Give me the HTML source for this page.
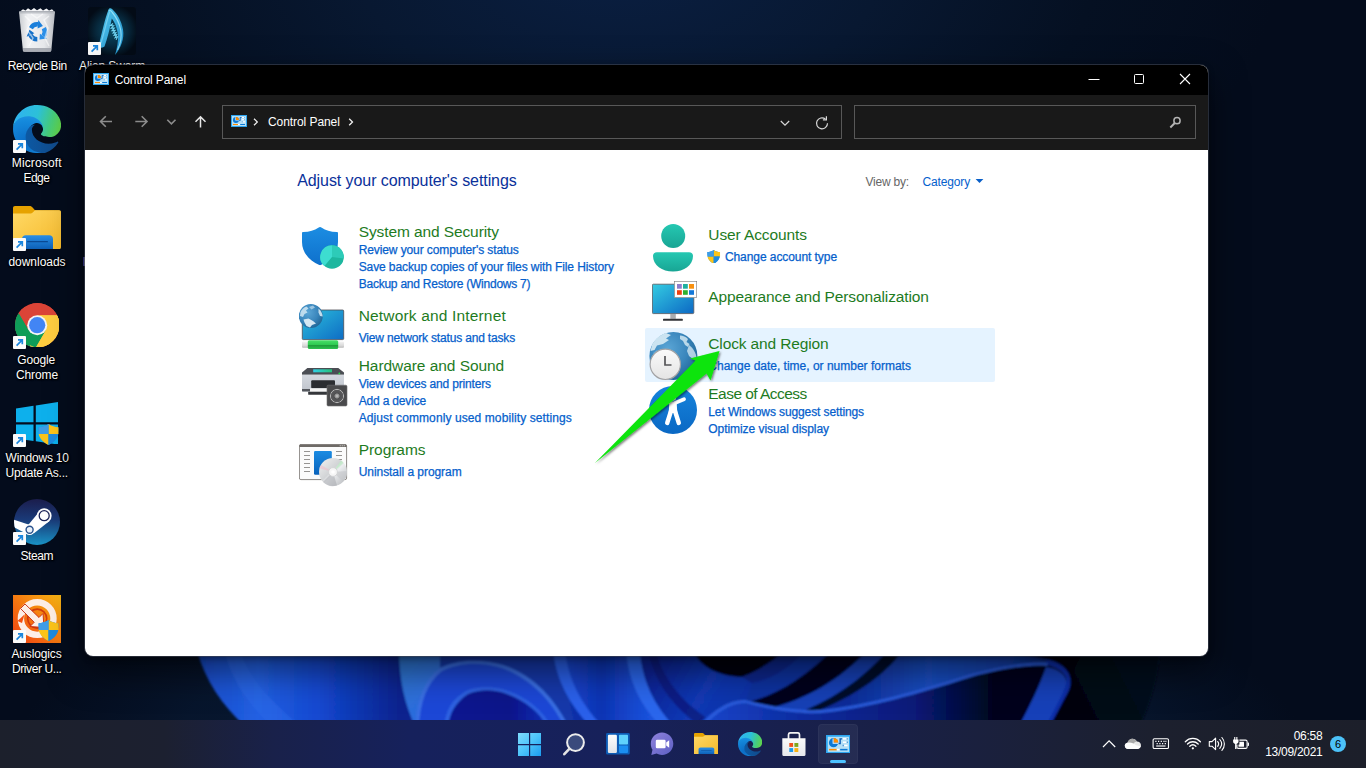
<!DOCTYPE html>
<html lang="en"><head><meta charset="utf-8"><title>Control Panel</title>
<style>
html,body{margin:0;padding:0;}
body{width:1366px;height:768px;overflow:hidden;position:relative;background:#040c1c;font-family:"Liberation Sans",sans-serif;}
.t{position:absolute;white-space:nowrap;display:block;}
.abs{position:absolute;}
#wall{position:absolute;left:0;top:0;width:1366px;height:768px;}
#win{position:absolute;left:85px;top:65px;width:1123px;height:591px;border-radius:8px;background:#fff;overflow:hidden;box-shadow:0 0 0 1px rgba(70,75,90,.55),0 14px 36px rgba(0,0,0,.55),0 2px 6px rgba(0,0,0,.35);}
#tb{position:absolute;left:0;top:0;width:100%;height:30px;background:#000;}
#nav{position:absolute;left:0;top:30px;width:100%;height:55px;background:#191919;}
.box{position:absolute;top:10px;height:32px;border:1px solid #585858;background:#191919;box-sizing:border-box;}
#task{position:absolute;left:0;top:720px;width:1366px;height:48px;background:linear-gradient(90deg,#1c202c 0%,#1c2030 12%,#19214a 20%,#16215c 30%,#17215a 45%,#182050 55%,#192046 65%,#1b2036 78%,#1c202e 85%,#1c1f2a 100%);}
.lk{-webkit-text-stroke:.25px #0560cc;}
.dl{text-shadow:0 0 2px #000,1px 1px 2px #000,0 1px 1px #000;}
</style></head>
<body>
<svg id="wall" width="1366" height="768" viewBox="0 0 1366 768"><defs>
<radialGradient id="wg0" cx="620" cy="-40" r="660" gradientUnits="userSpaceOnUse" gradientTransform="translate(620 -40) scale(1 .55) translate(-620 40)"><stop offset="0" stop-color="#0a1f42"/><stop offset=".4" stop-color="#081831"/><stop offset=".72" stop-color="#051022"/><stop offset="1" stop-color="#040c1c"/></radialGradient>
<linearGradient id="wp1" x1="197" y1="0" x2="400" y2="0" gradientUnits="userSpaceOnUse"><stop offset="0" stop-color="#184ccc"/><stop offset=".3" stop-color="#2260e2"/><stop offset=".6" stop-color="#1448d0"/><stop offset="1" stop-color="#08238e"/></linearGradient>
<linearGradient id="wp2" x1="400" y1="656" x2="470" y2="720" gradientUnits="userSpaceOnUse"><stop offset="0" stop-color="#2f78d2"/><stop offset="1" stop-color="#2a62e6"/></linearGradient>
<linearGradient id="wp3" x1="553" y1="0" x2="650" y2="0" gradientUnits="userSpaceOnUse"><stop offset="0" stop-color="#1a4cd8"/><stop offset=".5" stop-color="#0e34b4"/><stop offset="1" stop-color="#1a52dc"/></linearGradient>
<linearGradient id="wp4" x1="650" y1="656" x2="760" y2="720" gradientUnits="userSpaceOnUse"><stop offset="0" stop-color="#0a2092"/><stop offset=".5" stop-color="#1238b4"/><stop offset="1" stop-color="#0e30a4"/></linearGradient>
<linearGradient id="wp5" x1="850" y1="0" x2="1046" y2="0" gradientUnits="userSpaceOnUse"><stop offset="0" stop-color="#0c2c98"/><stop offset=".4" stop-color="#1a4ec2"/><stop offset=".8" stop-color="#1340ac"/><stop offset="1" stop-color="#0a2c88"/></linearGradient>
<linearGradient id="wp6" x1="880" y1="0" x2="1045" y2="0" gradientUnits="userSpaceOnUse"><stop offset="0" stop-color="#0d3290"/><stop offset=".6" stop-color="#0a2a80"/><stop offset="1" stop-color="#061440"/></linearGradient>
<linearGradient id="wp7" x1="450" y1="0" x2="550" y2="0" gradientUnits="userSpaceOnUse"><stop offset="0" stop-color="#0a1890"/><stop offset=".6" stop-color="#08148a"/><stop offset="1" stop-color="#1030b8"/></linearGradient>
<radialGradient id="wg1" cx="660" cy="740" r="640" gradientUnits="userSpaceOnUse" gradientTransform="translate(660 740) scale(1 .28) translate(-660 -740)"><stop offset="0" stop-color="#0c2850" stop-opacity=".75"/><stop offset=".75" stop-color="#0a2040" stop-opacity=".45"/><stop offset="1" stop-color="#081a38" stop-opacity="0"/></radialGradient>
<linearGradient id="wp9" x1="1050" y1="720" x2="1150" y2="670" gradientUnits="userSpaceOnUse"><stop offset="0" stop-color="#01030a"/><stop offset=".35" stop-color="#020611"/><stop offset="1" stop-color="#05101f"/></linearGradient>
<filter id="wbl" x="150" y="640" width="1050" height="100" filterUnits="userSpaceOnUse"><feGaussianBlur stdDeviation="1.1"/></filter>
<linearGradient id="wp8" x1="700" y1="0" x2="1030" y2="0" gradientUnits="userSpaceOnUse"><stop offset="0" stop-color="#1846cc"/><stop offset=".3" stop-color="#0e2ca0"/><stop offset=".65" stop-color="#081a78"/><stop offset=".9" stop-color="#02041a"/><stop offset="1" stop-color="#02041a"/></linearGradient>
</defs>
<rect width="1366" height="768" fill="url(#wg0)"/>
<rect width="1366" height="768" fill="url(#wg1)"/>
<g filter="url(#wbl)">
<path d="M197 650 C205 680 222 705 245 726 L1135 726 C1150 700 1158 675 1160 650 Z" fill="#0b2da8"/>
<path d="M197 650 C205 680 222 705 245 726 L420 726 C405 700 398 675 400 650 Z" fill="url(#wp1)"/>
<path d="M224 650 C232 680 248 705 272 726 L300 726 C270 700 250 680 240 650 Z" fill="#2b6ae8" opacity=".55"/>
<path d="M399 650 C399 680 405 705 415 726 L570 726 L560 650 Z" fill="url(#wp2)"/>
<path d="M440 650 L560 650 L575 726 L560 726 C550 700 530 676 500 666 C480 660 455 662 440 668Z" fill="#1238aa"/>
<path d="M416 726 C417 700 424 680 440 668 C455 660 480 658 503 665 C535 676 555 700 568 726Z" fill="#3a70e4"/>
<path d="M419 726 C420 702 427 683 442 671 C457 663 480 661 502 668 C532 679 552 702 564 726Z" fill="#1a46d6"/>
<path d="M444 726 C446 710 452 699 466 691 C478 686 494 686 508 691 C528 698 542 710 551 726Z" fill="#2e62e2"/>
<path d="M448 726 C450 712 456 702 468 694 C480 689 494 689 507 694 C526 701 539 712 547 726Z" fill="url(#wp7)"/>
<path d="M553 650 C556 680 570 705 590 726 L660 726 C640 705 628 680 626 650 Z" fill="url(#wp3)"/>
<path d="M553 650 C556 680 570 705 590 726 L602 726 C582 705 568 680 565 650 Z" fill="#2a60ea"/>
<path d="M626 650 C628 680 640 705 660 726 L674 726 C654 705 642 680 640 650 Z" fill="#2c66ec"/>
<path d="M640 650 C642 680 654 705 674 726 L910 726 L910 650 Z" fill="url(#wp4)"/>
<path d="M655 650 C665 685 690 710 720 726 L700 726 C675 708 655 685 648 650Z" fill="#081a7c" opacity=".8"/>
<path d="M693 650 C700 668 720 676 742 677 C760 670 775 660 785 650Z" fill="#01030c"/>
<path d="M742 677 C760 670 775 660 785 650 L806 650 C790 668 770 680 752 683Z" fill="#0b288c"/>
<path d="M752 683 C770 680 790 668 806 650 L832 650 C812 672 790 688 762 698 C750 702 745 700 745 703 Z" fill="#0e30a0"/>
<path d="M745 703 C775 696 805 678 832 650 L868 650 C840 680 805 700 768 709 Z" fill="#02051a"/>
<path d="M768 709 C805 700 840 680 868 650 L888 650 C862 680 835 700 800 712 Z" fill="#1440b6"/>
<path d="M790 716 C830 702 862 680 888 650 L905 650 C885 678 850 702 810 718 Z" fill="#030a2c"/>
<path d="M800 718 C850 700 885 676 903 650 L1046 650 L1046 664 C1030 663 1000 668 971 676 C940 685 900 697 857 707 C835 711 815 715 800 718Z" fill="url(#wp5)"/>
<path d="M697 726 C710 712 725 702 745 703 C770 708 800 716 830 712 C870 706 915 694 971 676 C1000 668 1030 663 1047 665 C1060 668 1068 676 1066 682 C1064 690 1058 700 1044 726Z" fill="url(#wp8)"/>
<path d="M700 726 C712 712 727 700 745 700 C770 706 800 713 830 709 C870 704 915 692 971 674 C1000 666 1030 661 1048 663 L1047 666 C1030 664 1000 669 971 677 C915 695 870 707 830 712 C800 716 770 709 745 703 C730 703 716 713 704 726Z" fill="#2a5cdc"/>
<path d="M1019 726 C1030 705 1040 685 1046 667 C1058 668 1068 676 1066 684 C1064 692 1058 702 1046 726Z" fill="#1440b8"/>
<path d="M905 650 C960 650 1020 652 1050 660 C1070 666 1074 680 1068 692 L1050 726 L1140 726 C1152 700 1158 675 1160 650 Z" fill="url(#wp9)"/>
<path d="M1035 650 C1050 654 1066 660 1072 672 L1084 650Z" fill="#01030a"/>
</g>
</svg>
<svg class="abs" style="left:19px;top:8px" width="36" height="44" viewBox="0 0 36 44" ><defs><linearGradient id="rbg" x1="0" y1="0" x2="1" y2="0"><stop offset="0" stop-color="#c9ccd0"/><stop offset=".25" stop-color="#f1f2f4"/><stop offset=".7" stop-color="#e6e8eb"/><stop offset="1" stop-color="#b9bcc2"/></linearGradient></defs>
<path d="M1 3.600 L4 1.200 L6.500 2.600 L9 0.300 L12 2.200 L15 0 L18 2.200 L21.500 0.300 L24 2.400 L27.500 0.500 L30 2.600 L33 1.300 L35.200 3.600Z" fill="#f3f4f6"/>
<path d="M0 3.600 H36 L32.300 42.600 C32.200 43.400 31.700 43.800 31 43.800 H5.200 C4.500 43.800 4 43.400 3.900 42.600Z" fill="url(#rbg)"/>
<path d="M0 3.600 H36 L35.800 5.400 H0.200Z" fill="#aeb2b8" opacity=".7"/>
<path d="M4 40 H32.300 L32 43 C32 43.500 31.600 43.800 31 43.800 H5.200 C4.600 43.800 4.200 43.500 4.200 43Z" fill="#9a9ea6" opacity=".8"/>
<g transform="translate(18.300 23.800)"><g id="rcy"><path d="M-6.500 -3.750 A7.500 7.500 0 0 1 0.650 -7.470" fill="none" stroke="#1b7fdb" stroke-width="4.600"/><path d="M1 -11.750 L0.300 -3.200 L5.600 -5.800Z" fill="#1b7fdb"/></g><g transform="rotate(120)"><path d="M-6.500 -3.750 A7.500 7.500 0 0 1 0.650 -7.470" fill="none" stroke="#2a8ee8" stroke-width="4.600"/><path d="M1 -11.750 L0.300 -3.200 L5.600 -5.800Z" fill="#2a8ee8"/></g><g transform="rotate(240)"><path d="M-6.500 -3.750 A7.500 7.500 0 0 1 0.650 -7.470" fill="none" stroke="#1470c8" stroke-width="4.600"/><path d="M1 -11.750 L0.300 -3.200 L5.600 -5.800Z" fill="#1470c8"/></g></g>
<path d="M6 8 L12 14 L8 22 L14 30 L10 38 M30 8 L25 12 L29 20 L26 30 L30 38 M12 6 L18 10 L24 6" fill="none" stroke="#fff" stroke-width="1.500" opacity=".55"/></svg>
<svg class="abs" style="left:88px;top:7px" width="48" height="48" viewBox="0 0 48 48" ><defs><radialGradient id="alg" cx=".5" cy=".5" r=".55"><stop offset="0" stop-color="#0b4d66"/><stop offset=".6" stop-color="#07283c"/><stop offset="1" stop-color="#030b16"/></radialGradient>
<linearGradient id="alc" x1="0" y1="0" x2="1" y2="1"><stop offset="0" stop-color="#55c8ee"/><stop offset="1" stop-color="#1f8fca"/></linearGradient></defs>
<rect width="48" height="48" rx="3" fill="url(#alg)"/>
<path d="M10.500 39.500 C13.500 28 16.500 13 20.500 2.500 C21.300 0.800 22.800 0.900 24.300 2.200 C29.500 7 33.500 14 35 22.500 C36.500 32 33 40.500 27 48 C29 41 30.800 33.500 29.800 26.500 C28.800 19.500 26.300 14.500 23.800 11.500 C22 21 19.500 31 16.500 39.500 C15 41 12 41 10.500 39.500Z" fill="url(#alc)"/>
<path d="M20.800 4 C22.300 3 23.300 4 24.300 5.500 C28.500 10.500 31.500 16.500 32.800 23.500 C34 31 32 38 29.500 43" fill="none" stroke="#a8ecfd" stroke-width="1.200" opacity=".75"/>
<path d="M13 36 C16 26 18.500 15 21.500 5" fill="none" stroke="#8fe0fa" stroke-width="1.200" opacity=".6"/>
<path d="M25 16.500 l-2.600 2 l3.200 0.300 l-2.400 2.300 l3.100 0 l-2.200 2.500 l3-.2 l-2 2.600 l2.800-.4 l-1.800 2.800 l2.600-.7 l-1.600 3 l2.400-1 l-1.400 3.200" fill="none" stroke="#6fd3f2" stroke-width="1.100"/></svg>
<svg class="abs" style="left:88px;top:42px" width="13" height="13" viewBox="0 0 13 13" ><g><rect x="0" y="0" width="13" height="13" rx="1" fill="#fbfbfb"/><path d="M3.6 9.6 L8.8 4.4 M5 3.9 H9.3 V8.2" fill="none" stroke="#1b86dd" stroke-width="1.7"/></g></svg>
<svg class="abs" style="left:13px;top:104.5px" width="48" height="48" viewBox="0 0 256 256" ><defs><linearGradient id="e1a" x1="63" y1="84" x2="241" y2="84" gradientTransform="translate(0 90)" gradientUnits="userSpaceOnUse"><stop offset="0" stop-color="#0c59a4"/><stop offset="1" stop-color="#114a8b"/></linearGradient>
<radialGradient id="e1c" cx="70" cy="200" r="190" gradientUnits="userSpaceOnUse"><stop offset="0" stop-color="#0b6bc4"/><stop offset=".6" stop-color="#1489dc"/><stop offset="1" stop-color="#2aa4e8"/></radialGradient>
<linearGradient id="e1e" x1="20" y1="40" x2="250" y2="110" gradientUnits="userSpaceOnUse"><stop offset="0" stop-color="#2fb4ee"/><stop offset=".45" stop-color="#2cc0d8"/><stop offset=".8" stop-color="#46cc7a"/><stop offset="1" stop-color="#5ed24e"/></linearGradient></defs>
<path d="M235.7 195.5c-3.4 1.8-7 3.4-10.600 4.700-11.500 4.300-23.600 6.500-35.900 6.500-47.300 0-88.500-32.500-88.500-74.300 0.100-11.400 6.400-21.900 16.400-27.300-42.800 1.800-53.800 46.400-53.800 72.500 0 73.900 68.100 81.400 82.800 81.400 7.900 0 19.800-2.300 27-4.600l1.300-0.400c27.600-9.500 51-28.100 66.600-52.800 1.200-1.900 0.600-4.300-1.200-5.500-1.300-0.800-2.900-0.900-4.100-0.200z" fill="url(#e1a)"/>
<path d="M105.700 241.400c-8.900-5.500-16.600-12.800-22.700-21.300-26.300-36-18.400-86.500 17.600-112.800 3.800-2.700 7.700-5.200 11.900-7.200 3.100-1.500 8.400-4.100 15.500-4 10.100 0.100 19.600 4.900 25.700 13 4 5.400 6.300 11.900 6.400 18.700 0-0.200 24.500-79.600-80-79.600-43.900 0-80 41.600-80 78.200-0.200 19.300 4 38.500 12.100 56 27.600 58.800 94.800 87.600 156.400 67.100-21.100 6.600-44.100 3.700-62.900-8.100z" fill="url(#e1c)"/>
<path d="M152.300 148.900c-0.800 1-3.300 2.500-3.300 5.700 0 2.600 1.700 5.200 4.800 7.300 14.400 10.100 41.700 8.700 41.800 8.700 10.700 0 21.200-2.900 30.500-8.300 18.800-11 30.400-31.100 30.400-52.900 0.300-22.400-8-37.300-11.300-43.900-21.200-41.300-66.800-65-116.400-65-70.300-0.500-127.500 55.700-128.500 125.700 0.500-36.500 36.800-66 80-66 3.500 0 23.500 0.300 42 10 16.300 8.600 24.900 18.900 30.800 29.200 6.200 10.700 7.300 24.100 7.300 29.500 0 5.300-2.700 13.300-7.800 19.900z" fill="url(#e1e)"/></svg>
<svg class="abs" style="left:13px;top:139.8px" width="13" height="13" viewBox="0 0 13 13" ><g><rect x="0" y="0" width="13" height="13" rx="1" fill="#fbfbfb"/><path d="M3.6 9.6 L8.8 4.4 M5 3.9 H9.3 V8.2" fill="none" stroke="#1b86dd" stroke-width="1.7"/></g></svg>
<svg class="abs" style="left:13px;top:205.9px" width="48" height="43.3" viewBox="0 0 48 43.500" preserveAspectRatio="none"><defs><linearGradient id="f1f" x1="0" y1="0" x2="1" y2="1"><stop offset="0" stop-color="#ffd966"/><stop offset="1" stop-color="#f5b92a"/></linearGradient>
<linearGradient id="f1b" x1="0" y1="0" x2="0" y2="1"><stop offset="0" stop-color="#2a8fe6"/><stop offset="1" stop-color="#0c5fb6"/></linearGradient></defs>
<path d="M2 0 H16.500 C18 0 18.800 0.600 19.800 1.800 L22 4.300 H46 C47.200 4.300 48 5.100 48 6.300 V12 H0 V2 C0 0.800 0.800 0 2 0Z" fill="#e6a200"/>
<path d="M0 7.500 H17 C18.200 7.500 19.200 7 20 6.200 L22 4.300 H46 C47.200 4.300 48 5.100 48 6.300 V41.500 C48 42.700 47.200 43.500 46 43.500 H2 C0.800 43.500 0 42.700 0 41.500Z" fill="url(#f1f)"/>
<path d="M9 43.500 V33 C9 30.800 10.500 29.300 12.700 29.300 H36.300 C38.500 29.300 40 30.800 40 33 V43.500Z" fill="url(#f1b)"/>
<rect x="14" y="35.200" width="21" height="1.300" rx=".6" fill="#0a4a94"/></svg>
<svg class="abs" style="left:13px;top:238px" width="13" height="13" viewBox="0 0 13 13" ><g><rect x="0" y="0" width="13" height="13" rx="1" fill="#fbfbfb"/><path d="M3.6 9.6 L8.8 4.4 M5 3.9 H9.3 V8.2" fill="none" stroke="#1b86dd" stroke-width="1.7"/></g></svg>
<svg class="abs" style="left:14.8px;top:303px" width="44.4" height="44.4" viewBox="0 0 44.4 44.4" ><defs><clipPath id="chc"><circle cx="22.200" cy="22.200" r="22.200"/></clipPath></defs>
<g clip-path="url(#chc)"><rect width="45" height="45" fill="#db4437"/>
<path d="M22.200 22.200 L3 11.100 L-2 30 L10 48 L14 48 Z" fill="#0f9d58"/>
<path d="M22.200 22.200 L3.200 11.300 L-4 22 L0 45 L22.200 46 L33 27Z" fill="#0f9d58"/>
<path d="M22.200 22.200 L42 11.800 L48 11.800 L48 48 L11.200 48 L22.200 32Z" fill="#ffcd40"/>
<path d="M22.200 12.200 L46 12.200 L46 16 L31 27.200Z" fill="#ffcd40"/>
<path d="M22.200 12.200 H44 L44 4 L22.200 -2 L2 8 L13.600 27.200Z" fill="#db4437"/>
<path d="M13.500 27.200 L3.400 9.700 L0 16 L12 36Z" fill="#0f9d58"/>
<path d="M30.900 27.200 L20.800 44.700 L10 40 L13.500 27.200 L22.200 32.200Z" fill="#0f9d58"/>
<path d="M30.900 27.200 L20.600 45 L30 46 L46 30 L44.200 12.200 L22.200 12.200 C27.700 12.200 32.200 16.700 32.200 22.200 C32.200 24 31.700 25.700 30.900 27.200Z" fill="#ffcd40"/>
</g>
<circle cx="22.200" cy="22.200" r="10" fill="#f4f4f4"/><circle cx="22.200" cy="22.200" r="8.100" fill="#4285f4"/></svg>
<svg class="abs" style="left:13px;top:336px" width="13" height="13" viewBox="0 0 13 13" ><g><rect x="0" y="0" width="13" height="13" rx="1" fill="#fbfbfb"/><path d="M3.6 9.6 L8.8 4.4 M5 3.9 H9.3 V8.2" fill="none" stroke="#1b86dd" stroke-width="1.7"/></g></svg>
<svg class="abs" style="left:15.8px;top:401.9px" width="42.5" height="42.6" viewBox="0 0 42.5 42.6" ><g fill="#0db0ec"><path d="M0 6.500 L17.500 3.800 V20.200 H0Z"/><path d="M19.800 3.400 L42.500 0 V20.200 H19.800Z"/><path d="M0 22.400 H17.500 V38.900 L0 36.400Z"/><path d="M19.800 22.400 H42.500 V42.600 L19.800 39.300Z"/></g></svg>
<svg class="abs" style="left:38.1px;top:424.2px" width="21" height="21" viewBox="0 0 21 21" ><g><path d="M10.5 0 C7 2.2 4 3 0.6 3.2 C0.2 11 3 17.5 10.5 21 C18 17.5 20.8 11 20.4 3.2 C17 3 14 2.2 10.5 0Z" fill="#1d8be0"/><path d="M10.5 0 C14 2.2 17 3 20.4 3.2 L20.5 10 H10.5Z" fill="#fcc419"/><path d="M10.5 10 V21 C5 18.4 1.6 14.6 0.7 10Z" fill="#fcc419"/><path d="M10.5 10 H20.3 C19.4 14.6 16 18.4 10.5 21Z" fill="#1d8be0"/><path d="M10.5 0 C7 2.2 4 3 0.6 3.2 L0.6 10 H10.5Z" fill="#3f9de6"/></g></svg>
<svg class="abs" style="left:13px;top:434px" width="13" height="13" viewBox="0 0 13 13" ><g><rect x="0" y="0" width="13" height="13" rx="1" fill="#fbfbfb"/><path d="M3.6 9.6 L8.8 4.4 M5 3.9 H9.3 V8.2" fill="none" stroke="#1b86dd" stroke-width="1.7"/></g></svg>
<svg class="abs" style="left:14.1px;top:498.5px" width="46" height="46" viewBox="0 0 46 46" ><defs><linearGradient id="stg" x1="0" y1="0" x2="0" y2="1"><stop offset="0" stop-color="#1b1d4c"/><stop offset=".45" stop-color="#1a3a78"/><stop offset="1" stop-color="#1a93c6"/></linearGradient><clipPath id="stc"><circle cx="23" cy="23" r="23"/></clipPath></defs>
<circle cx="23" cy="23" r="23" fill="url(#stg)"/>
<g clip-path="url(#stc)" fill="#fff"><path d="M-1 20.500 L16 26 L12.500 34.800 L-1 27.800Z"/><path d="M13 27.500 L24.500 13.500 L35.500 22 L20 34.200Z"/><circle cx="30.200" cy="16.700" r="7.400"/><circle cx="15.600" cy="30.700" r="5.400"/></g>
<circle cx="30.200" cy="16.700" r="5" fill="none" stroke="#1c2458" stroke-width="1.300"/>
<circle cx="15.600" cy="30.700" r="3.500" fill="#e8f0f8" stroke="#27508c" stroke-width="1.400"/></svg>
<svg class="abs" style="left:13px;top:532px" width="13" height="13" viewBox="0 0 13 13" ><g><rect x="0" y="0" width="13" height="13" rx="1" fill="#fbfbfb"/><path d="M3.6 9.6 L8.8 4.4 M5 3.9 H9.3 V8.2" fill="none" stroke="#1b86dd" stroke-width="1.7"/></g></svg>
<svg class="abs" style="left:13px;top:595px" width="48" height="48" viewBox="0 0 48 48" ><defs><linearGradient id="aug" x1="0" y1="1" x2="1" y2="0"><stop offset="0" stop-color="#ee3d12"/><stop offset=".5" stop-color="#f57a10"/><stop offset="1" stop-color="#f8b714"/></linearGradient></defs>
<rect width="48" height="48" fill="url(#aug)"/>
<circle cx="24.200" cy="23.600" r="16.300" fill="none" stroke="#fdeee6" stroke-width="6.400"/>
<circle cx="24.200" cy="23.600" r="9.500" fill="none" stroke="#c8280a" stroke-width="1.600" opacity=".8"/>
<path d="M7.500 13.500 L12 9 L26 22.500 L30 18.500 L31 32.500 L17 31.500 L21.200 27.300Z" fill="#fdeee6" stroke="#c8280a" stroke-width=".9"/>
<path d="M4.500 26 L11.500 19.500 L9 28Z" fill="#f4500f"/></svg>
<svg class="abs" style="left:38.1px;top:620.2px" width="21" height="21" viewBox="0 0 21 21" ><g><path d="M10.5 0 C7 2.2 4 3 0.6 3.2 C0.2 11 3 17.5 10.5 21 C18 17.5 20.8 11 20.4 3.2 C17 3 14 2.2 10.5 0Z" fill="#1d8be0"/><path d="M10.5 0 C14 2.2 17 3 20.4 3.2 L20.5 10 H10.5Z" fill="#fcc419"/><path d="M10.5 10 V21 C5 18.4 1.6 14.6 0.7 10Z" fill="#fcc419"/><path d="M10.5 10 H20.3 C19.4 14.6 16 18.4 10.5 21Z" fill="#1d8be0"/><path d="M10.5 0 C7 2.2 4 3 0.6 3.2 L0.6 10 H10.5Z" fill="#3f9de6"/></g></svg>
<svg class="abs" style="left:13px;top:630px" width="13" height="13" viewBox="0 0 13 13" ><g><rect x="0" y="0" width="13" height="13" rx="1" fill="#fbfbfb"/><path d="M3.6 9.6 L8.8 4.4 M5 3.9 H9.3 V8.2" fill="none" stroke="#1b86dd" stroke-width="1.7"/></g></svg>
<div class="abs" style="left:83px;top:257px;width:2px;height:9px;background:linear-gradient(90deg,#0c0c86,#d0d4dc)"></div>
<span class="t dl" style="left:7.70px;top:59px;font-size:12px;line-height:14px;color:#fff;letter-spacing:-0.387px;">Recycle Bin</span>
<span class="t dl" style="left:11.80px;top:156px;font-size:12px;line-height:14px;color:#fff;letter-spacing:0.136px;">Microsoft</span>
<span class="t dl" style="left:23.50px;top:171px;font-size:12px;line-height:14px;color:#fff;letter-spacing:-0.556px;">Edge</span>
<span class="t dl" style="left:8.40px;top:255px;font-size:12px;line-height:14px;color:#fff;letter-spacing:-0.019px;">downloads</span>
<span class="t dl" style="left:17.30px;top:353px;font-size:12px;line-height:14px;color:#fff;letter-spacing:-0.166px;">Google</span>
<span class="t dl" style="left:16.00px;top:368px;font-size:12px;line-height:14px;color:#fff;letter-spacing:-0.113px;">Chrome</span>
<span class="t dl" style="left:5.60px;top:451px;font-size:12px;line-height:14px;color:#fff;letter-spacing:-0.226px;">Windows 10</span>
<span class="t dl" style="left:5.60px;top:466px;font-size:12px;line-height:14px;color:#fff;letter-spacing:-0.264px;">Update As...</span>
<span class="t dl" style="left:20.40px;top:549px;font-size:12px;line-height:14px;color:#fff;letter-spacing:-0.416px;">Steam</span>
<span class="t dl" style="left:11.40px;top:647px;font-size:12px;line-height:14px;color:#fff;letter-spacing:-0.129px;">Auslogics</span>
<span class="t dl" style="left:12.00px;top:662px;font-size:12px;line-height:14px;color:#fff;letter-spacing:-0.409px;">Driver U...</span>
<span class="t dl" style="left:79.00px;top:59px;font-size:12px;line-height:14px;color:#fff;letter-spacing:-0.123px;">Alien Swarm</span>
<div id="win">
<div id="tb"></div>
<div id="nav"></div>
</div>
<svg class="abs" style="left:93px;top:73px" width="16" height="12" viewBox="0 0 16 12" preserveAspectRatio="none"><rect x="0" y="0" width="16" height="12" fill="#3db5f6"/><rect x="1" y="1" width="14" height="10" fill="#b5e0f6"/>
<rect x="0.5" y="0.5" width="15" height="11" fill="none" stroke="#2ea6f0" stroke-width="1"/>
<circle cx="4.900" cy="5" r="3" fill="#0b79d6"/><path d="M4.900 5 V1.900 A3.100 3.100 0 0 1 8 5Z" fill="#ff8c00"/><path d="M4.300 5.600 V2.200 H4.900 V5 H7.800 V5.600Z" fill="#eaf6fd"/>
<path d="M8.200 5.600 H9.200 V2.500 H10.500" fill="none" stroke="#0b5cb8" stroke-width=".9"/>
<rect x="11" y="2" width="2.200" height="1" fill="#fff"/><rect x="11" y="4.200" width="2.200" height="1" fill="#fff"/><rect x="11.800" y="6.300" width="2.200" height="1" fill="#fff"/>
<path d="M13.600 2.500 H14 M13.600 4.700 H14 M10.900 6.800 H11.400" stroke="#0b5cb8" stroke-width=".9"/>
<rect x="2" y="9" width="5" height="1" fill="#ff8c00"/><rect x="7" y="9" width="1.700" height="1" fill="#fff"/><rect x="9.200" y="9" width="4.800" height="1" fill="#0b79d6"/></svg>
<span class="t" style="left:114.70px;top:73px;font-size:12px;line-height:14px;color:#fff;letter-spacing:-0.108px;">Control Panel</span>
<div class="box" style="left:222px;top:105px;width:620px;height:34px"></div>
<div class="box" style="left:854px;top:105px;width:342px;height:34px"></div>
<svg class="abs" style="left:0px;top:0px" width="1366" height="160" viewBox="0 0 1366 160" ><path d="M1088.500 79.500 H1099.500" stroke="#fff" stroke-width="1"/><rect x="1134.500" y="74.500" width="9" height="9" rx="1" fill="none" stroke="#fff" stroke-width="1"/><path d="M1180 74 L1190 84 M1190 74 L1180 84" stroke="#fff" stroke-width="1.100"/><path d="M112 121.500 H100.500 M105.800 116.200 L100.500 121.500 L105.800 126.800" fill="none" stroke="#8c8c8c" stroke-width="1.600"/><path d="M135.300 121.500 H147 M141.700 116.200 L147 121.500 L141.700 126.800" fill="none" stroke="#8c8c8c" stroke-width="1.600"/><path d="M167.300 119.700 L171.400 123.800 L175.500 119.700" fill="none" stroke="#8c8c8c" stroke-width="1.600"/><path d="M200.500 127.500 V116.800 M195.500 121.800 L200.500 116.800 L205.500 121.800" fill="none" stroke="#e6e6e6" stroke-width="1.500"/><path d="M254 118.700 L257.300 122 L254 125.300 M349.200 118.700 L352.500 122 L349.200 125.300" fill="none" stroke="#f0f0f0" stroke-width="1.300"/><path d="M780.800 121 L785 125.200 L789.200 121" fill="none" stroke="#d8d8d8" stroke-width="1.200"/><g transform="translate(0 .8)"><path d="M827.500 122.500 A5.500 5.500 0 1 1 825.400 118.200" fill="none" stroke="#d8d8d8" stroke-width="1.200"/><path d="M826.400 115.500 V119 H822.900" fill="none" stroke="#d8d8d8" stroke-width="1.200"/></g><circle cx="1177" cy="120.700" r="3.100" fill="none" stroke="#b4b4b4" stroke-width="1.500"/><path d="M1174.800 123 L1170.300 127.500" stroke="#b4b4b4" stroke-width="1.900"/></svg>
<svg class="abs" style="left:231px;top:115px" width="16" height="12" viewBox="0 0 16 12" preserveAspectRatio="none"><rect x="0" y="0" width="16" height="12" fill="#3db5f6"/><rect x="1" y="1" width="14" height="10" fill="#b5e0f6"/>
<rect x="0.5" y="0.5" width="15" height="11" fill="none" stroke="#2ea6f0" stroke-width="1"/>
<circle cx="4.900" cy="5" r="3" fill="#0b79d6"/><path d="M4.900 5 V1.900 A3.100 3.100 0 0 1 8 5Z" fill="#ff8c00"/><path d="M4.300 5.600 V2.200 H4.900 V5 H7.800 V5.600Z" fill="#eaf6fd"/>
<path d="M8.200 5.600 H9.200 V2.500 H10.500" fill="none" stroke="#0b5cb8" stroke-width=".9"/>
<rect x="11" y="2" width="2.200" height="1" fill="#fff"/><rect x="11" y="4.200" width="2.200" height="1" fill="#fff"/><rect x="11.800" y="6.300" width="2.200" height="1" fill="#fff"/>
<path d="M13.600 2.500 H14 M13.600 4.700 H14 M10.900 6.800 H11.400" stroke="#0b5cb8" stroke-width=".9"/>
<rect x="2" y="9" width="5" height="1" fill="#ff8c00"/><rect x="7" y="9" width="1.700" height="1" fill="#fff"/><rect x="9.200" y="9" width="4.800" height="1" fill="#0b79d6"/></svg>
<span class="t" style="left:268.00px;top:115px;font-size:12px;line-height:14px;color:#fff;letter-spacing:-0.070px;">Control Panel</span>
<div class="abs" style="left:645px;top:328px;width:350px;height:53.500px;background:#e5f3ff;border-radius:2px"></div>
<svg class="abs" style="left:302px;top:226.8px" width="42" height="42" viewBox="0 0 42 42" ><defs><linearGradient id="shg" x1="0" y1="0" x2="0" y2="1"><stop offset="0" stop-color="#1c8de2"/><stop offset="1" stop-color="#0e70cc"/></linearGradient></defs>
<path d="M16.300 0.700 C17.400 -0.100 18.700 -0.100 19.800 0.700 C23.500 3.300 28.500 5 34.800 5 C35.600 5 36 5.400 36 6.200 V15 C36 26 28 34 18.800 38 C18.300 38.200 17.800 38.200 17.300 38 C8 34 0 26 0 15 V6.200 C0 5.400 0.400 5 1.200 5 C7.500 5 12.600 3.300 16.300 0.700Z" fill="url(#shg)"/>
<circle cx="30" cy="30" r="11.800" fill="#1db79f"/>
<path d="M30 30 L22.400 39 A11.800 11.800 0 0 1 30 18.200Z" fill="#3dddd0"/>
<path d="M30 30 V18.200 A11.800 11.800 0 0 1 41.700 31.500Z" fill="#2dcbb8"/></svg>
<svg class="abs" style="left:299px;top:304px" width="46" height="46" viewBox="0 0 46 46" ><defs><linearGradient id="nwg" x1="0" y1="0" x2="1" y2="1"><stop offset="0" stop-color="#2cc0dc"/><stop offset="1" stop-color="#0e6cc4"/></linearGradient>
<linearGradient id="nwc" x1="0" y1="0" x2="0" y2="1"><stop offset="0" stop-color="#49de68"/><stop offset=".55" stop-color="#2cc950"/><stop offset=".6" stop-color="#1f9e3c"/><stop offset="1" stop-color="#2cc24e"/></linearGradient>
<linearGradient id="nwp" x1="0" y1="0" x2="0" y2="1"><stop offset="0" stop-color="#f4f4f4"/><stop offset=".7" stop-color="#d8d8d8"/><stop offset="1" stop-color="#b8b8b8"/></linearGradient><radialGradient id="ng" cx=".38" cy=".35" r=".75"><stop offset="0" stop-color="#5ba6d6"/><stop offset=".55" stop-color="#3a86bc"/><stop offset="1" stop-color="#1b5f8e"/></radialGradient></defs>
<rect x="3.300" y="6" width="41.400" height="29.600" rx="1" fill="url(#nwg)" stroke="#4c4c54" stroke-width=".8"/>
<rect x="3" y="37.500" width="42" height="6.200" rx="1" fill="url(#nwp)"/>
<rect x="8.800" y="36.300" width="30.400" height="8.600" rx="1.500" fill="url(#nwc)"/>
<circle cx="11.800" cy="12" r="12" fill="url(#ng)"/>
<path d="M1.500 8 C3 5 5 3.500 7.500 2.500 L9.500 4.500 L7 6.500 L8.500 8.500 L5.500 10 L4 13 L1 12Z" fill="#d2e8f3" opacity=".85"/>
<path d="M4.500 15.500 L9.500 14.500 L14 17 L17 19.500 L13 21 L11 23.500 L7.500 22 L5.500 18.500Z" fill="#e2f0f7" opacity=".92"/>
<path d="M19.500 4.500 C22 6.500 23.500 9.500 23.700 12.500 L21 12 L19.500 8.500Z" fill="#d2e8f3" opacity=".9"/>
<path d="M10 3 L14 1.500 L16 3.500 L12.500 5.500Z" fill="#c2dcec" opacity=".7"/></svg>
<svg class="abs" style="left:302px;top:368px" width="46" height="39" viewBox="0 0 46 39" ><defs><linearGradient id="prb" x1="0" y1="0" x2="0" y2="1"><stop offset="0" stop-color="#d4d8df"/><stop offset="1" stop-color="#bfc4cc"/></linearGradient>
<linearGradient id="prs" x1="0" y1="0" x2="1" y2="0"><stop offset="0" stop-color="#2fd0e6"/><stop offset="1" stop-color="#26c27a"/></linearGradient>
<radialGradient id="spk" cx=".5" cy=".5" r=".5"><stop offset="0" stop-color="#c8c8c8"/><stop offset=".3" stop-color="#8a8a8a"/><stop offset=".4" stop-color="#505052"/><stop offset=".82" stop-color="#5a5a5c"/><stop offset=".9" stop-color="#b8b8b8"/><stop offset="1" stop-color="#6a6a6a"/></radialGradient></defs>
<path d="M5.400 0 H36.300 L42 4.500 V6.800 H0 V4.500Z" fill="#4b4e54"/>
<rect x="11.200" y="1.300" width="18.800" height="3" fill="url(#prs)"/>
<circle cx="37.300" cy="5.400" r=".9" fill="#24e04a"/>
<rect x="0" y="6.800" width="42" height="16.600" fill="url(#prb)"/>
<path d="M0 21 H42 V22.400 C42 23 41.600 23.400 41 23.400 H1 C0.400 23.400 0 23 0 22.400Z" fill="#55585e"/>
<rect x="9.200" y="12.200" width="23.800" height="8" rx="1" fill="#2b2d31"/>
<rect x="8" y="20.300" width="22" height="3.600" fill="#f4f4f4"/>
<rect x="6.200" y="23.800" width="22" height="3" rx=".5" fill="#34363a"/>
<rect x="25" y="17.200" width="20" height="20.800" rx="1.200" fill="#4a4a4c" stroke="#6e6e70" stroke-width=".6"/>
<circle cx="35" cy="28" r="7.200" fill="url(#spk)"/></svg>
<svg class="abs" style="left:299px;top:444px" width="49" height="43" viewBox="0 0 49 43" ><defs><linearGradient id="pgb" x1="0" y1="0" x2="0" y2="1"><stop offset="0" stop-color="#1b8be2"/><stop offset="1" stop-color="#0963bc"/></linearGradient>
<linearGradient id="cdg" x1="0" y1="0" x2="1" y2="1"><stop offset="0" stop-color="#f2f2f2"/><stop offset=".45" stop-color="#d2d4d6"/><stop offset=".55" stop-color="#eceef0"/><stop offset="1" stop-color="#b2b4b8"/></linearGradient></defs>
<rect x=".4" y=".4" width="47.200" height="35.200" rx="1.500" fill="#fbfbfb" stroke="#6e6a66" stroke-width=".8"/>
<path d="M.4 3 V1.900 C.4 1 1 .4 1.900 .4 H46.100 C47 .4 47.600 1 47.600 1.900 V3Z" fill="#6e6a66"/>
<g fill="#fff"><circle cx="41.200" cy="1.700" r=".5"/><circle cx="43.200" cy="1.700" r=".5"/><circle cx="45.200" cy="1.700" r=".5"/></g>
<path d="M5 7.500 H11 M5 11.500 H11 M5 15.500 H11 M5 19.500 H11 M5 23.500 H11 M5 27.500 H11 M37 7.500 H43 M37 11.500 H43 M37 15.500 H43" stroke="#8a8886" stroke-width=".9"/>
<rect x="15" y="7" width="17.800" height="23.800" rx="1.200" fill="url(#pgb)"/>
<circle cx="34" cy="28" r="14" fill="url(#cdg)"/>
<path d="M34 28 L20.600 24.300 A14 14 0 0 1 22 21Z" fill="#f2b8c8" opacity=".5"/><path d="M34 28 L42 16.600 A14 14 0 0 1 44.500 19Z" fill="#b8f0c0" opacity=".6"/>
<path d="M34 28 L24 38 A14 14 0 0 0 38 41.400Z" fill="#a8aaae" opacity=".55"/><path d="M34 28 L48 27 A14 14 0 0 1 44 37.800Z" fill="#c4c6ca" opacity=".6"/>
<circle cx="34" cy="28" r="4.400" fill="#f6f6f6" stroke="#cfd0d2" stroke-width=".8"/><circle cx="34" cy="28" r="1.800" fill="#fff"/></svg>
<svg class="abs" style="left:652.8px;top:223.8px" width="41" height="48" viewBox="0 0 41 48" ><defs><linearGradient id="usg" x1="0" y1="0" x2="0" y2="1"><stop offset="0" stop-color="#25c8b2"/><stop offset="1" stop-color="#18a594"/></linearGradient></defs>
<circle cx="20.200" cy="12" r="12" fill="url(#usg)"/>
<path d="M4 28.200 H36 C38.500 28.200 40 29.800 40 32 C40 41 31 47.600 20 47.600 C9 47.600 0 41 0 32 C0 29.800 1.500 28.200 4 28.200Z" fill="url(#usg)"/></svg>
<svg class="abs" style="left:707.3px;top:249.7px" width="13.4" height="13.8" viewBox="0 0 21 21" preserveAspectRatio="none"><g><path d="M10.5 0 C7 2.2 4 3 0.6 3.2 C0.2 11 3 17.5 10.5 21 C18 17.5 20.8 11 20.4 3.2 C17 3 14 2.2 10.5 0Z" fill="#1d8be0"/><path d="M10.5 0 C14 2.2 17 3 20.4 3.2 L20.5 10 H10.5Z" fill="#fcc419"/><path d="M10.5 10 V21 C5 18.4 1.6 14.6 0.7 10Z" fill="#fcc419"/><path d="M10.5 10 H20.3 C19.4 14.6 16 18.4 10.5 21Z" fill="#1d8be0"/><path d="M10.5 0 C7 2.2 4 3 0.6 3.2 L0.6 10 H10.5Z" fill="#3f9de6"/></g></svg>
<svg class="abs" style="left:652px;top:281px" width="45.5" height="40" viewBox="0 0 45.5 40" ><defs><linearGradient id="apg" x1="0" y1="0" x2="1" y2="1"><stop offset="0" stop-color="#34cce2"/><stop offset="1" stop-color="#0c68c4"/></linearGradient></defs>
<rect x=".400" y="3.200" width="41.400" height="29.400" rx="1" fill="url(#apg)" stroke="#55555a" stroke-width=".8"/>
<rect x="18.300" y="33" width="5.500" height="4.800" fill="#a9acb0"/>
<rect x="11" y="37.700" width="19.800" height="2.100" rx=".6" fill="#303236"/>
<rect x="22.300" y=".300" width="22.400" height="16.400" fill="#fff" stroke="#787878" stroke-width=".6"/>
<rect x="25" y="3" width="4.800" height="4.700" fill="#8f7dcb"/><rect x="31" y="3" width="4.800" height="4.700" fill="#1fb0a0"/><rect x="37" y="3" width="5" height="4.700" fill="#f8900f"/>
<rect x="25" y="9.200" width="4.800" height="4.600" fill="#f0400f"/><rect x="31" y="9.200" width="4.800" height="4.600" fill="#2fb02f"/><rect x="37" y="9.200" width="5" height="4.600" fill="#1478d8"/></svg>
<svg class="abs" style="left:648.6px;top:331.6px" width="49" height="49" viewBox="0 0 49 49" ><defs><radialGradient id="cg" cx=".38" cy=".35" r=".75"><stop offset="0" stop-color="#5ba6d6"/><stop offset=".55" stop-color="#3a86bc"/><stop offset="1" stop-color="#1b5f8e"/></radialGradient><linearGradient id="ckf" x1="0" y1="0" x2="0" y2="1"><stop offset="0" stop-color="#fafafa"/><stop offset="1" stop-color="#e4e4e4"/></linearGradient></defs>
<circle cx="24.400" cy="24" r="24" fill="url(#cg)"/>
<path d="M3 13 C6 7 11 3 17 1 L22 3 L17 6.500 L20 8 L14 12 L8 13.500 L5.500 18 L1.500 19Z" fill="#d9ecf5" opacity=".9"/>
<path d="M4 21 L8 18 L10 21 L6 24Z" fill="#6ab0dc" opacity=".8"/>
<path d="M31 3.500 C34 3.500 37 5 39 7 L37.500 10 L40.500 12 L39 15 L36 13 L34 9 L31 7Z" fill="#d0e6f1" opacity=".85"/>
<path d="M40 13 C44 16 47 21 47.600 26 L44 27 L40 24 L38 19Z" fill="#cfe5f0" opacity=".8"/>
<circle cx="16.300" cy="32.300" r="15.200" fill="url(#ckf)" stroke="#a2a2a4" stroke-width="1.200"/>
<path d="M16 24 V33 H22.500" fill="none" stroke="#555558" stroke-width="1.700"/></svg>
<svg class="abs" style="left:649px;top:386px" width="48" height="48" viewBox="0 0 48 48" ><defs><linearGradient id="eag" x1="0" y1="0" x2="0" y2="1"><stop offset="0" stop-color="#1684dc"/><stop offset="1" stop-color="#0a68c4"/></linearGradient></defs>
<circle cx="24" cy="24" r="24" fill="url(#eag)"/>
<circle cx="24" cy="11.500" r="3.200" fill="#fff"/>
<path d="M13 13.300 L24 17.800 L35 13.300" fill="none" stroke="#fff" stroke-width="3.800" stroke-linecap="round" stroke-linejoin="round"/>
<path d="M20.300 16.500 H27.700 L28.300 27 H19.700Z" fill="#fff"/>
<path d="M22 25 L18.200 37 M26 25 L29.800 37" fill="none" stroke="#fff" stroke-width="4.400" stroke-linecap="round"/></svg>
<span class="t" style="left:297.20px;top:171px;font-size:16px;line-height:19px;color:#0a319a;letter-spacing:-0.075px;">Adjust your computer&#x27;s settings</span>
<span class="t" style="left:865.50px;top:175px;font-size:12px;line-height:14px;color:#666;letter-spacing:-0.204px;">View by:</span>
<span class="t" style="left:922.50px;top:175px;font-size:12px;line-height:14px;color:#0560cc;letter-spacing:-0.149px;">Category</span>
<svg class="abs" style="left:975px;top:178px" width="10" height="6" viewBox="0 0 10 6" ><path d="M.6 1 H8.400 L4.500 5Z" fill="#0a5fc8"/></svg>
<span class="t" style="left:358.70px;top:222px;font-size:15.5px;line-height:19px;color:#1e7b1e;letter-spacing:-0.102px;">System and Security</span>
<span class="t" style="left:358.70px;top:306px;font-size:15.5px;line-height:19px;color:#1e7b1e;letter-spacing:0.166px;">Network and Internet</span>
<span class="t" style="left:358.70px;top:356px;font-size:15.5px;line-height:19px;color:#1e7b1e;letter-spacing:-0.055px;">Hardware and Sound</span>
<span class="t" style="left:358.70px;top:440px;font-size:15.5px;line-height:19px;color:#1e7b1e;letter-spacing:-0.048px;">Programs</span>
<span class="t" style="left:708.30px;top:225px;font-size:15.5px;line-height:19px;color:#1e7b1e;letter-spacing:-0.110px;">User Accounts</span>
<span class="t" style="left:708.30px;top:287px;font-size:15.5px;line-height:19px;color:#1e7b1e;letter-spacing:-0.118px;">Appearance and Personalization</span>
<span class="t" style="left:708.30px;top:334px;font-size:15.5px;line-height:19px;color:#1e7b1e;letter-spacing:-0.128px;">Clock and Region</span>
<span class="t" style="left:708.30px;top:384px;font-size:15.5px;line-height:19px;color:#1e7b1e;letter-spacing:-0.534px;">Ease of Access</span>
<span class="t lk" style="left:358.70px;top:243px;font-size:12px;line-height:14px;color:#0560cc;letter-spacing:-0.104px;">Review your computer&#x27;s status</span>
<span class="t lk" style="left:358.70px;top:260px;font-size:12px;line-height:14px;color:#0560cc;letter-spacing:-0.100px;">Save backup copies of your files with File History</span>
<span class="t lk" style="left:358.70px;top:277px;font-size:12px;line-height:14px;color:#0560cc;letter-spacing:-0.238px;">Backup and Restore (Windows 7)</span>
<span class="t lk" style="left:358.70px;top:331px;font-size:12px;line-height:14px;color:#0560cc;letter-spacing:-0.169px;">View network status and tasks</span>
<span class="t lk" style="left:358.70px;top:377px;font-size:12px;line-height:14px;color:#0560cc;letter-spacing:-0.177px;">View devices and printers</span>
<span class="t lk" style="left:358.70px;top:394px;font-size:12px;line-height:14px;color:#0560cc;letter-spacing:-0.173px;">Add a device</span>
<span class="t lk" style="left:358.70px;top:411px;font-size:12px;line-height:14px;color:#0560cc;letter-spacing:0.097px;">Adjust commonly used mobility settings</span>
<span class="t lk" style="left:358.70px;top:465px;font-size:12px;line-height:14px;color:#0560cc;letter-spacing:-0.060px;">Uninstall a program</span>
<span class="t lk" style="left:724.90px;top:250px;font-size:12px;line-height:14px;color:#0560cc;letter-spacing:-0.069px;">Change account type</span>
<span class="t lk" style="left:708.30px;top:359px;font-size:12px;line-height:14px;color:#0560cc;letter-spacing:-0.005px;">Change date, time, or number formats</span>
<span class="t lk" style="left:708.30px;top:405px;font-size:12px;line-height:14px;color:#0560cc;letter-spacing:-0.109px;">Let Windows suggest settings</span>
<span class="t lk" style="left:708.30px;top:422px;font-size:12px;line-height:14px;color:#0560cc;letter-spacing:-0.058px;">Optimize visual display</span>
<svg class="abs" style="left:0px;top:0px" width="1366" height="768" viewBox="0 0 1366 768" style="pointer-events:none"><defs><filter id="ars" x="-10%" y="-10%" width="125%" height="125%"><feDropShadow dx="1.200" dy="1.200" stdDeviation="1" flood-color="#000" flood-opacity=".55"/></filter></defs>
<path d="M595 463 L695.600 360.600 L690 358.500 L719.500 351 L710.500 380.500 L706.500 373.500Z" fill="#0ae40a" filter="url(#ars)"/></svg>
<div id="task"></div>
<div class="abs" style="left:818px;top:724px;width:40px;height:40px;border-radius:4px;background:rgba(255,255,255,.055);box-shadow:inset 0 0 0 1px rgba(255,255,255,.035)"></div>
<div class="abs" style="left:830px;top:760px;width:16px;height:3px;border-radius:1.500px;background:#4cc2ff"></div>
<svg class="abs" style="left:518px;top:732.8px" width="23.2" height="23.2" viewBox="0 0 23.2 23.2" ><defs><linearGradient id="stw" x1="0" y1="0" x2="1" y2="1"><stop offset="0" stop-color="#7fdcfd"/><stop offset=".5" stop-color="#4cc4fa"/><stop offset="1" stop-color="#1a9bf0"/></linearGradient></defs>
<path d="M0 0 H11 V11 H0Z M12.200 0 H23.200 V11 H12.200Z M0 12.200 H11 V23.200 H0Z M12.200 12.200 H23.200 V23.200 H12.200Z" fill="url(#stw)"/></svg>
<svg class="abs" style="left:562px;top:732.8px" width="24" height="24" viewBox="0 0 24 24" ><circle cx="13.500" cy="9.600" r="8.400" fill="#3a4a7c" stroke="#ececec" stroke-width="2"/><path d="M7.300 15.800 L2.300 21.200" stroke="#e4e4e4" stroke-width="2.600" stroke-linecap="round"/></svg>
<svg class="abs" style="left:606.2px;top:733.2px" width="23.8" height="21.6" viewBox="0 0 23.8 21.6" ><defs><linearGradient id="wdg" x1="0" y1="0" x2="0" y2="1"><stop offset="0" stop-color="#fdfdfd"/><stop offset="1" stop-color="#dfe3ea"/></linearGradient></defs>
<rect x="0" y="0" width="23.800" height="21.600" rx="1.500" fill="#0d5cb6"/>
<rect x="1.900" y="1.700" width="9" height="18.200" rx="1.200" fill="url(#wdg)"/>
<rect x="13" y="1.700" width="9" height="9.800" rx=".8" fill="#5fd2fd"/><rect x="13" y="12.400" width="9" height="7.500" rx=".8" fill="#1b8ef2"/></svg>
<svg class="abs" style="left:650px;top:732px" width="24" height="24" viewBox="0 0 24 24" ><defs><linearGradient id="ctg" x1="0" y1="0" x2="1" y2="1"><stop offset="0" stop-color="#8f82dc"/><stop offset="1" stop-color="#5c5fc4"/></linearGradient></defs>
<path d="M12 0.500 C18.300 0.500 23.300 5.500 23.300 11.700 C23.300 17.900 18.300 22.900 12 22.900 C10 22.900 8.200 22.400 6.600 21.600 L1.300 23 L2.500 17.800 C1.400 16 0.800 13.900 0.800 11.700 C0.800 5.500 5.800 0.500 12 0.500Z" fill="url(#ctg)"/>
<rect x="5.800" y="7.700" width="9.800" height="8.600" rx="1.300" fill="#fff"/><path d="M16.200 10.400 L19.200 8.300 V15.700 L16.200 13.600Z" fill="#fff"/></svg>
<svg class="abs" style="left:694px;top:732.8px" width="24.3" height="21.5" viewBox="0 0 48 43.500" preserveAspectRatio="none"><defs><linearGradient id="f2f" x1="0" y1="0" x2="1" y2="1"><stop offset="0" stop-color="#ffd966"/><stop offset="1" stop-color="#f5b92a"/></linearGradient>
<linearGradient id="f2b" x1="0" y1="0" x2="0" y2="1"><stop offset="0" stop-color="#2a8fe6"/><stop offset="1" stop-color="#0c5fb6"/></linearGradient></defs>
<path d="M2 0 H16.500 C18 0 18.800 0.600 19.800 1.800 L22 4.300 H46 C47.200 4.300 48 5.100 48 6.300 V12 H0 V2 C0 0.800 0.800 0 2 0Z" fill="#e6a200"/>
<path d="M0 7.500 H17 C18.200 7.500 19.200 7 20 6.200 L22 4.300 H46 C47.200 4.300 48 5.100 48 6.300 V41.500 C48 42.700 47.200 43.500 46 43.500 H2 C0.800 43.500 0 42.700 0 41.500Z" fill="url(#f2f)"/>
<path d="M9 43.500 V33 C9 30.800 10.500 29.300 12.700 29.300 H36.300 C38.500 29.300 40 30.800 40 33 V43.500Z" fill="url(#f2b)"/>
<rect x="14" y="35.200" width="21" height="1.300" rx=".6" fill="#0a4a94"/></svg>
<svg class="abs" style="left:737.8px;top:731.6px" width="24.2" height="24.2" viewBox="0 0 256 256" ><defs><linearGradient id="e2a" x1="63" y1="84" x2="241" y2="84" gradientTransform="translate(0 90)" gradientUnits="userSpaceOnUse"><stop offset="0" stop-color="#0c59a4"/><stop offset="1" stop-color="#114a8b"/></linearGradient>
<radialGradient id="e2c" cx="70" cy="200" r="190" gradientUnits="userSpaceOnUse"><stop offset="0" stop-color="#0b6bc4"/><stop offset=".6" stop-color="#1489dc"/><stop offset="1" stop-color="#2aa4e8"/></radialGradient>
<linearGradient id="e2e" x1="20" y1="40" x2="250" y2="110" gradientUnits="userSpaceOnUse"><stop offset="0" stop-color="#2fb4ee"/><stop offset=".45" stop-color="#2cc0d8"/><stop offset=".8" stop-color="#46cc7a"/><stop offset="1" stop-color="#5ed24e"/></linearGradient></defs>
<path d="M235.7 195.5c-3.4 1.8-7 3.4-10.600 4.700-11.500 4.300-23.600 6.500-35.900 6.500-47.300 0-88.500-32.500-88.500-74.300 0.100-11.400 6.400-21.900 16.400-27.300-42.800 1.800-53.800 46.400-53.800 72.500 0 73.900 68.100 81.400 82.800 81.400 7.900 0 19.800-2.300 27-4.600l1.300-0.400c27.600-9.500 51-28.100 66.600-52.800 1.200-1.900 0.600-4.300-1.200-5.500-1.300-0.800-2.900-0.900-4.100-0.200z" fill="url(#e2a)"/>
<path d="M105.700 241.400c-8.900-5.500-16.600-12.800-22.700-21.300-26.300-36-18.400-86.500 17.600-112.800 3.800-2.700 7.700-5.200 11.900-7.200 3.100-1.500 8.400-4.100 15.500-4 10.100 0.100 19.600 4.900 25.700 13 4 5.400 6.300 11.900 6.400 18.700 0-0.200 24.500-79.600-80-79.600-43.900 0-80 41.600-80 78.200-0.200 19.300 4 38.500 12.100 56 27.600 58.800 94.800 87.600 156.400 67.100-21.100 6.600-44.100 3.700-62.900-8.100z" fill="url(#e2c)"/>
<path d="M152.300 148.900c-0.800 1-3.300 2.500-3.300 5.700 0 2.600 1.700 5.200 4.800 7.300 14.400 10.100 41.700 8.700 41.800 8.700 10.700 0 21.200-2.900 30.500-8.300 18.800-11 30.400-31.100 30.400-52.900 0.300-22.400-8-37.300-11.300-43.900-21.200-41.300-66.800-65-116.400-65-70.300-0.500-127.500 55.700-128.500 125.700 0.500-36.500 36.800-66 80-66 3.500 0 23.500 0.300 42 10 16.300 8.600 24.900 18.900 30.800 29.200 6.200 10.700 7.300 24.100 7.300 29.500 0 5.300-2.700 13.300-7.800 19.900z" fill="url(#e2e)"/></svg>
<svg class="abs" style="left:781.6px;top:731.9px" width="24" height="24.5" viewBox="0 0 24 24.5" ><defs><linearGradient id="srg" x1="0" y1="0" x2="0" y2="1"><stop offset="0" stop-color="#fafafa"/><stop offset="1" stop-color="#e6e8ec"/></linearGradient></defs>
<path d="M6.500 7 V2.800 C6.500 1.600 7.300 0.800 8.500 0.800 H15.500 C16.700 0.800 17.500 1.600 17.500 2.800 V7" fill="none" stroke="#f2f2f2" stroke-width="1.700"/>
<path d="M0.300 6.200 H23.500 V22.400 C23.500 23.400 22.800 24.100 21.800 24.100 H2 C1 24.100 0.300 23.400 0.300 22.400Z" fill="url(#srg)"/>
<rect x="7.300" y="11" width="3.800" height="3.900" fill="#f1511b"/><rect x="12.400" y="11" width="3.900" height="3.900" fill="#80a61c"/><rect x="7.300" y="16.100" width="3.800" height="3.900" fill="#1b9aea"/><rect x="12.400" y="16.100" width="3.900" height="3.900" fill="#f9b212"/></svg>
<svg class="abs" style="left:825.7px;top:734.5px" width="24.6" height="18.5" viewBox="0 0 16 12" preserveAspectRatio="none"><rect x="0" y="0" width="16" height="12" fill="#3db5f6"/><rect x="1" y="1" width="14" height="10" fill="#b5e0f6"/>
<rect x="0.5" y="0.5" width="15" height="11" fill="none" stroke="#2ea6f0" stroke-width="1"/>
<circle cx="4.900" cy="5" r="3" fill="#0b79d6"/><path d="M4.900 5 V1.900 A3.100 3.100 0 0 1 8 5Z" fill="#ff8c00"/><path d="M4.300 5.600 V2.200 H4.900 V5 H7.800 V5.600Z" fill="#eaf6fd"/>
<path d="M8.200 5.600 H9.200 V2.500 H10.500" fill="none" stroke="#0b5cb8" stroke-width=".9"/>
<rect x="11" y="2" width="2.200" height="1" fill="#fff"/><rect x="11" y="4.200" width="2.200" height="1" fill="#fff"/><rect x="11.800" y="6.300" width="2.200" height="1" fill="#fff"/>
<path d="M13.600 2.500 H14 M13.600 4.700 H14 M10.900 6.800 H11.400" stroke="#0b5cb8" stroke-width=".9"/>
<rect x="2" y="9" width="5" height="1" fill="#ff8c00"/><rect x="7" y="9" width="1.700" height="1" fill="#fff"/><rect x="9.200" y="9" width="4.800" height="1" fill="#0b79d6"/></svg>
<svg class="abs" style="left:0px;top:0px" width="1366" height="768" viewBox="0 0 1366 768" ><path d="M1103 747 L1109.100 740.800 L1115.200 747" fill="none" stroke="#fff" stroke-width="1.200"/>
<path d="M1128.200 748.900 C1126.200 748.900 1124.800 747.500 1124.800 745.700 C1124.800 744.100 1126 742.900 1127.500 742.700 C1128 740.400 1130 738.700 1132.400 738.700 C1134.400 738.700 1136.100 739.800 1136.900 741.500 C1139.200 741.500 1141 743.100 1141 745.300 C1141 747.400 1139.400 748.900 1137.400 748.900Z" fill="#e8e8e8"/>
<path d="M1127.500 742.800 C1130 741.600 1133 742.600 1136 745.300 L1140.800 746.200 C1140.400 747.800 1139 748.900 1137.400 748.900 H1128.200 C1126.200 748.900 1124.800 747.500 1124.800 745.700 C1124.800 744.300 1125.800 743.200 1127.500 742.800Z" fill="#fdfdfd"/>
<path d="M1127.500 742.700 C1128 740.400 1130 738.700 1132.400 738.700 C1134.400 738.700 1136.100 739.800 1136.900 741.500 C1135.500 741.700 1134 742.600 1133.400 743.600 C1131.500 742.400 1129.300 742.200 1127.500 742.700Z" fill="#a9a9a9"/>
<rect x="1153.100" y="738.800" width="15.400" height="9.700" rx="1.300" fill="none" stroke="#fff" stroke-width="1.100"/>
<path d="M1155.300 741.400 H1156.500 M1158 741.400 H1159.200 M1160.700 741.400 H1161.900 M1163.400 741.400 H1164.600 M1165.400 741.400 H1166.400 M1156.600 743.600 H1157.800 M1159.300 743.600 H1160.500 M1162 743.600 H1163.200 M1164.700 743.600 H1165.900" stroke="#fff" stroke-width="1.100"/><path d="M1156.200 746 H1165.500" stroke="#fff" stroke-width="1.100"/>
<g fill="none" stroke="#fff" stroke-width="1.300" stroke-linecap="round"><path d="M1185.300 741.700 C1189.600 737.300 1196.100 737.300 1200.400 741.700"/><path d="M1187.500 744 C1190.500 741 1195.200 741 1198.200 744"/><path d="M1189.800 746.200 C1191.600 744.500 1194.100 744.500 1195.900 746.200"/></g><circle cx="1192.850" cy="748.300" r="1.150" fill="#fff"/>
<path d="M1209.300 741.600 H1212 L1215.600 738.200 V749.600 L1212 746.200 H1209.300Z" fill="none" stroke="#fff" stroke-width="1.100" stroke-linejoin="round"/>
<g fill="none" stroke="#fff" stroke-width="1.100" stroke-linecap="round"><path d="M1217.700 741.500 C1218.900 743 1218.900 744.800 1217.700 746.300"/><path d="M1219.800 739.500 C1222.100 742.200 1222.100 745.600 1219.800 748.300"/><path d="M1221.900 737.500 C1225.200 741.300 1225.200 746.500 1221.900 750.300"/></g>
<rect x="1236.900" y="740.100" width="10.200" height="8.300" rx="1.500" fill="none" stroke="#fff" stroke-width="1.100"/><path d="M1247.700 742.600 H1248.300 C1248.800 742.600 1249 742.900 1249 743.300 V745.200 C1249 745.600 1248.800 745.900 1248.300 745.900 H1247.700Z" fill="#fff"/>
<rect x="1238.500" y="741.700" width="5.500" height="5.100" rx=".5" fill="#fff"/>
<path d="M1232.400 738.800 H1239.400 V744.600 H1232.400Z" fill="#1c202c"/><path d="M1233.100 739.500 H1238.500 V741.600 C1238.500 742.900 1237.600 743.800 1236.500 743.900 V748.900 H1235.100 V743.900 C1234 743.800 1233.100 742.900 1233.100 741.600Z M1234.200 737 H1235.300 V739.500 H1234.200Z M1236.300 737 H1237.400 V739.500 H1236.300Z" fill="#fff"/></svg>
<span class="t" style="left:1293.70px;top:729px;font-size:12px;line-height:14px;color:#fff;letter-spacing:-0.286px;">06:58</span>
<span class="t" style="left:1265.20px;top:745px;font-size:12px;line-height:14px;color:#fff;letter-spacing:-0.276px;">13/09/2021</span>
<div class="abs" style="left:1330px;top:736px;width:16px;height:16px;border-radius:8px;background:#4cc2f8"></div>
<span class="t" style="left:1188.00px;width:300px;text-align:center;top:738px;font-size:11px;line-height:13px;color:#000;">6</span>
</body></html>
